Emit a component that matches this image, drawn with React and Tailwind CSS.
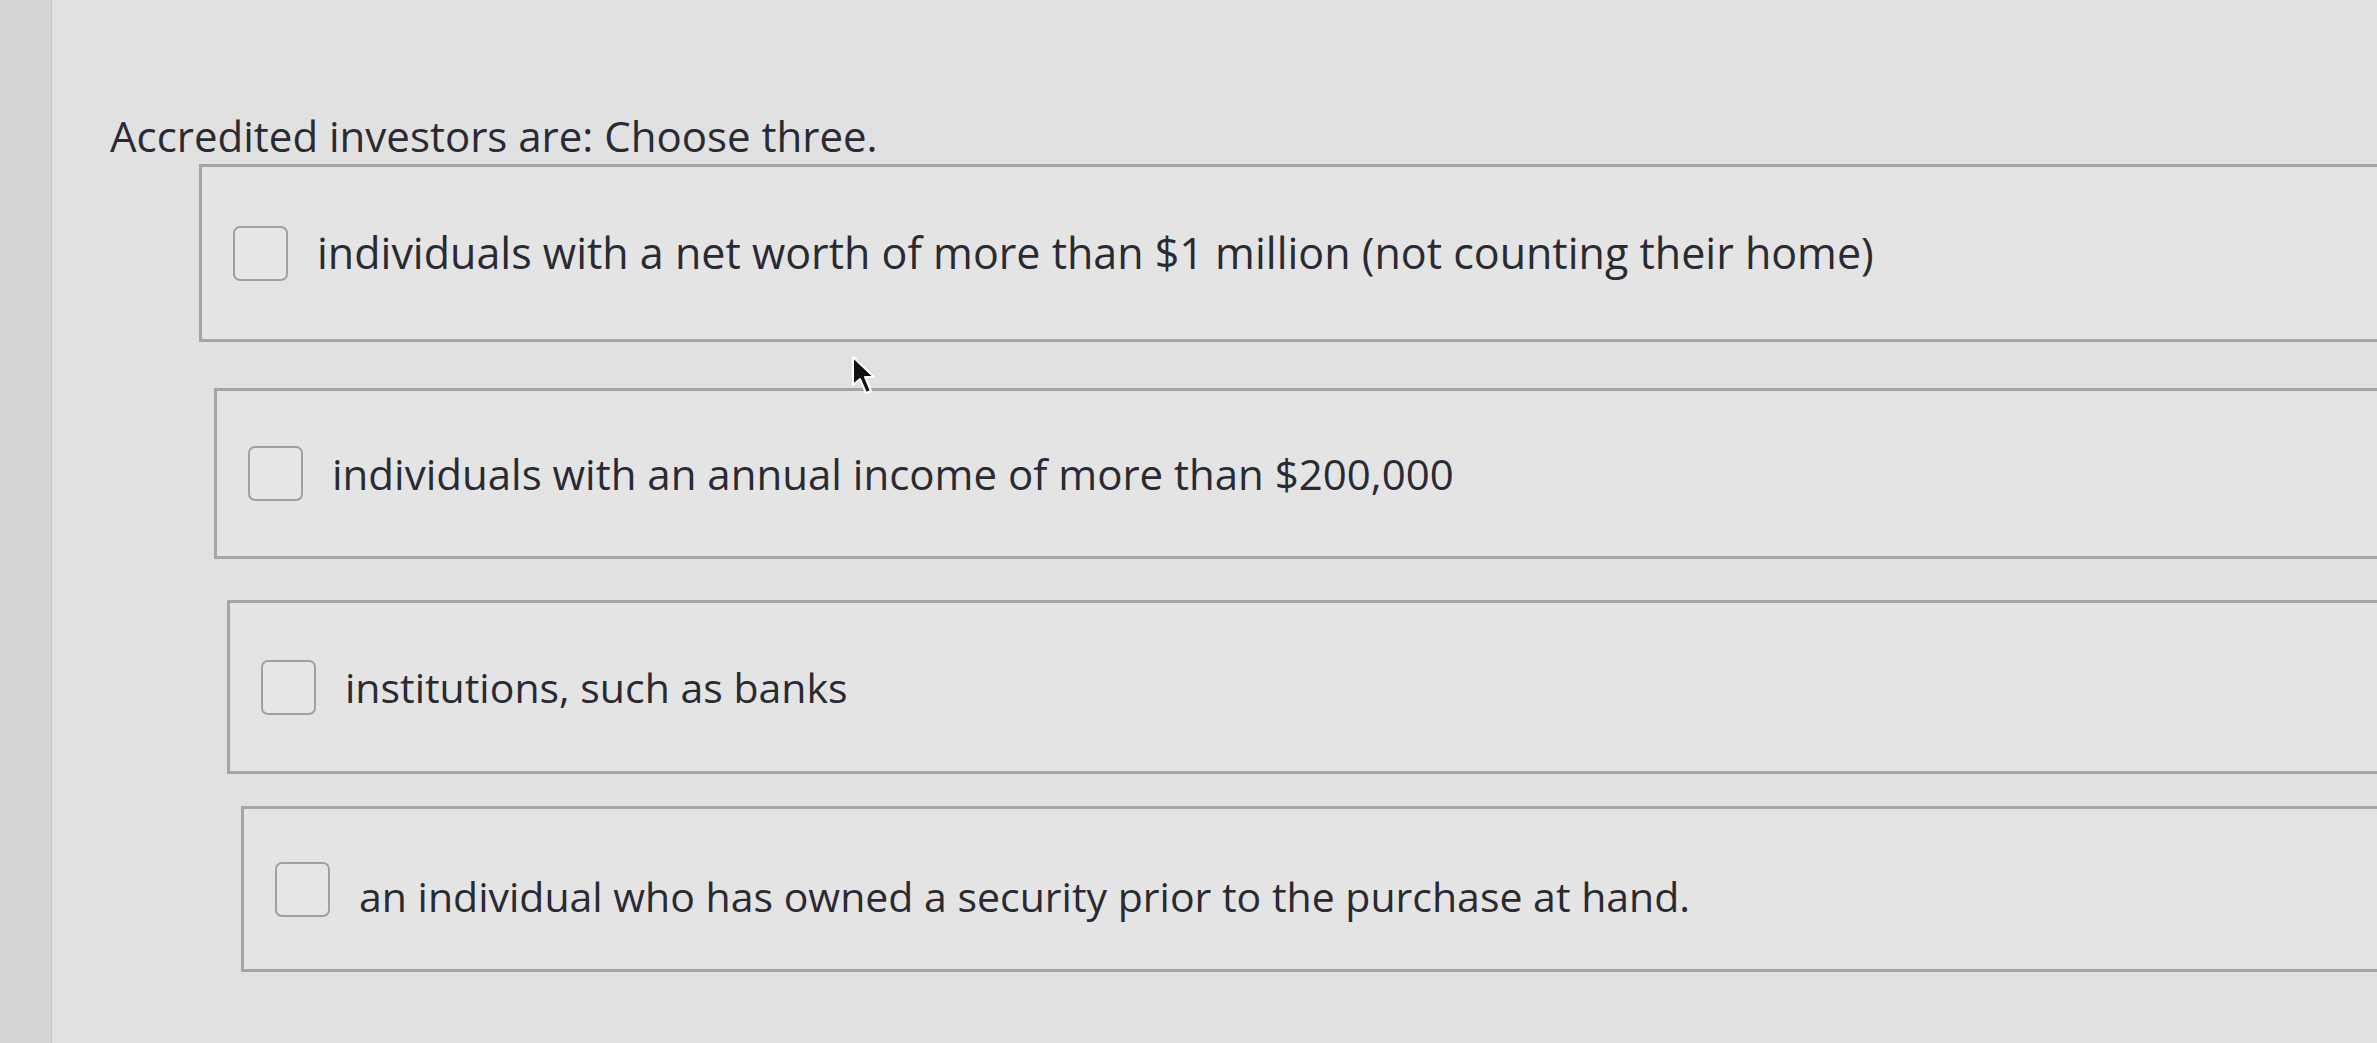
import React from 'react';

const options = [
  { text: 'individuals with a net worth of more than $1 million (not counting their home)', box: 'ml-[147px] mt-0 h-[178px]', size: 'text-[43px]' },
  { text: 'individuals with an annual income of more than $200,000', box: 'ml-[162px] mt-[46px] h-[171px]', size: 'text-[42px]' },
  { text: 'institutions, such as banks', box: 'ml-[175px] mt-[41px] h-[174px]', size: 'text-[41px]' },
  { text: 'an individual who has owned a security prior to the purchase at hand.', box: 'ml-[189px] mt-[32px] h-[166px]', size: 'text-[41px] pt-[14px]' },
];

function Cursor() {
  return (
    <svg className="absolute left-[851px] top-[355px]" width="26" height="42" viewBox="0 0 26 42">
      <path d="M2 2 L2 30 L9 24 L15 38 L20 36 L14 22 L23 22 Z" fill="#111" stroke="#fff" strokeWidth="2" strokeLinejoin="round" />
    </svg>
  );
}

export default function App() {
  return (
    <div className="relative flex h-[1043px] w-full overflow-hidden bg-[#e1e1e2]" style={{ fontFamily: '"Open Sans", "Noto Sans", sans-serif' }}>
      <div className="w-[52px] shrink-0 border-r border-[#c8c8ca] bg-[#d5d5d7]" />
      <div className="flex-1">
        <h1 className="ml-[58px] mt-[108px] text-[42px] leading-[56px] font-normal text-[#2a2a32]">
          Accredited investors are: Choose three.
        </h1>
        <div className="flex flex-col">
          {options.map((o) => (
            <label key={o.text} className={`${o.box} flex items-center border-[3px] border-r-0 border-[#a4a4a9] bg-[#e4e4e5] pl-[31px]`}>
              <span className="h-[55px] w-[55px] shrink-0 rounded-[7px] border-2 border-[#a0a0a4] bg-[#e6e6e7]" />
              <span className={`ml-[29px] ${o.size} leading-[50px] text-[#2a2a32]`}>{o.text}</span>
            </label>
          ))}
        </div>
      </div>
      <Cursor />
    </div>
  );
}
